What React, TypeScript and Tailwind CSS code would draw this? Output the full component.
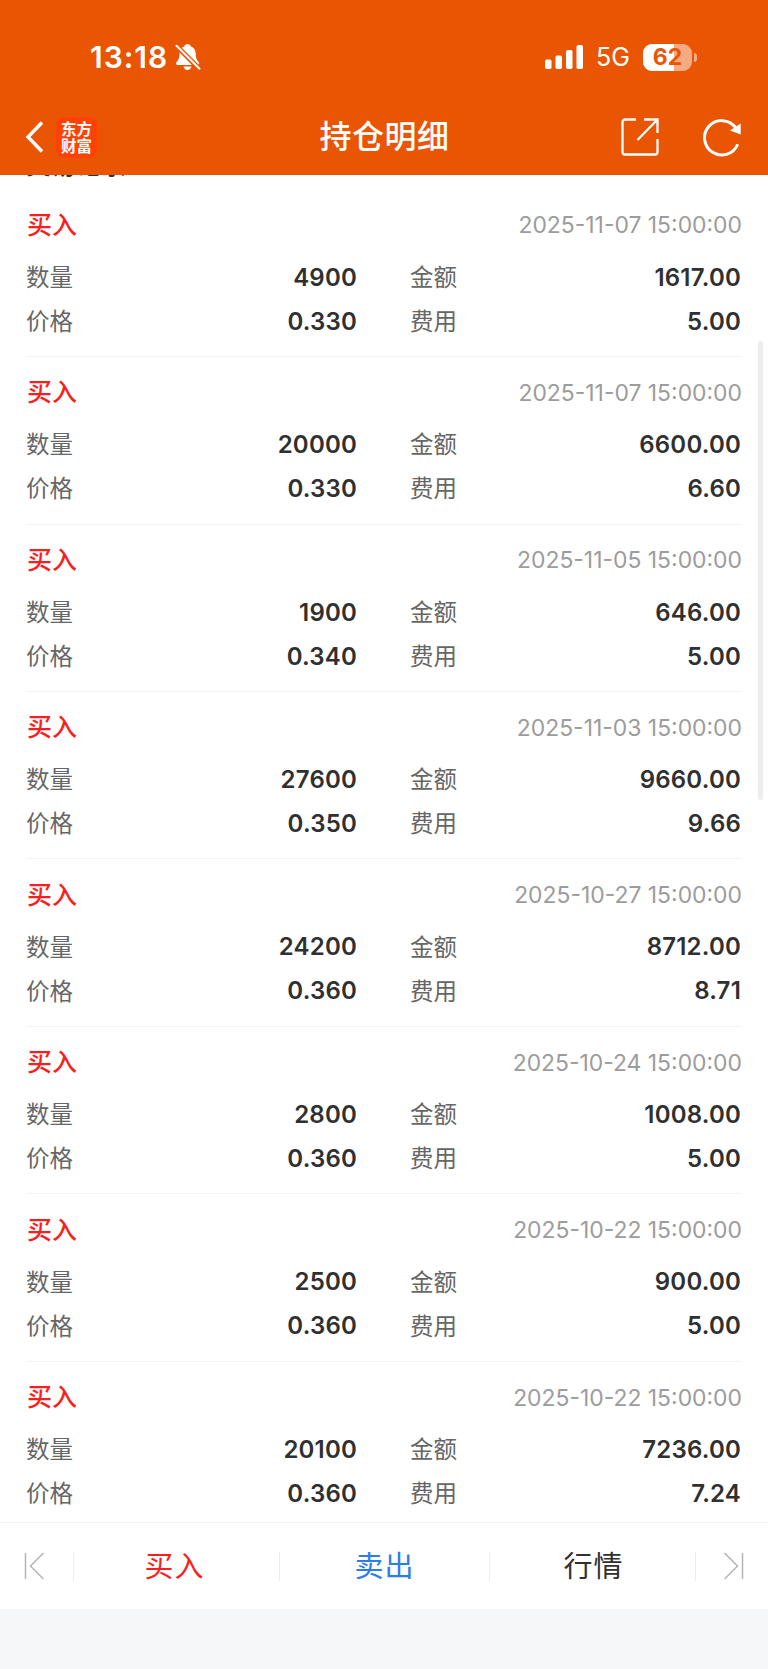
type Trade = {
  time: string;
  count: string;
  price: string;
  amount: string;
  fee: string;
};

const TRADES: Trade[] = [
  { time: '2025-11-07 15:00:00', count: '4900', price: '0.330', amount: '1617.00', fee: '5.00' },
  { time: '2025-11-07 15:00:00', count: '20000', price: '0.330', amount: '6600.00', fee: '6.60' },
  { time: '2025-11-05 15:00:00', count: '1900', price: '0.340', amount: '646.00', fee: '5.00' },
  { time: '2025-11-03 15:00:00', count: '27600', price: '0.350', amount: '9660.00', fee: '9.66' },
  { time: '2025-10-27 15:00:00', count: '24200', price: '0.360', amount: '8712.00', fee: '8.71' },
  { time: '2025-10-24 15:00:00', count: '2800', price: '0.360', amount: '1008.00', fee: '5.00' },
  { time: '2025-10-22 15:00:00', count: '2500', price: '0.360', amount: '900.00', fee: '5.00' },
  { time: '2025-10-22 15:00:00', count: '20100', price: '0.360', amount: '7236.00', fee: '7.24' },
];

function StatusBar() {
  return (
    <div className="flex h-[115px] items-start justify-between pl-[90px] pr-[71px] pt-[39px]">
      <div className="flex h-9 items-center">
        <span className="w-[85px] text-[30px] font-semibold leading-9 tracking-[1px]">13:18</span>
        <svg width="26" height="28" viewBox="0 0 26 28" fill="none">
          <path
            d="M12.500 1c-1.700 0-2.900 1-3.300 2.400C6 4.500 4.600 7 4.500 10.500c-.1 4.500-1 6.300-3 8.700-.9 1.200-.5 2.800 1.200 2.800h20c1.500 0 2-1.600 1-2.800-2-2.400-2.900-4.200-3-8.700-.1-3.500-1.600-6-4.800-7.100C15.500 2 14.200 1 12.500 1Z"
            fill="#fff"
          />
          <path d="M8.500 23.500h8c-.5 2-2 3.500-4 3.500s-3.500-1.500-4-3.500Z" fill="#fff" />
          <path d="M0 1.500 26 27.500" stroke="#ea5504" strokeWidth="5" />
          <path d="m1.500 2.800 23 22.900" stroke="#fff" strokeWidth="2" strokeLinecap="round" />
        </svg>
      </div>
      <div className="flex h-9 items-center">
        <svg width="39" height="26" viewBox="0 0 39 26" fill="#fff">
          <rect x="0" y="15.500" width="6.500" height="9.500" rx="1.700" />
          <rect x="10.500" y="11.500" width="6.500" height="13.500" rx="1.700" />
          <rect x="21" y="6" width="6.500" height="19" rx="1.700" />
          <rect x="31.500" y="1" width="6.500" height="24" rx="1.700" />
        </svg>
        <span className="ml-[12px] w-[47px] text-[25px] leading-9">5G</span>
        <div className="relative flex h-[27px] w-[49px] items-center justify-center overflow-hidden rounded-[9px] bg-[#f5aa82]">
          <div className="absolute inset-y-0 left-0 w-[31px] bg-white" />
          <span className="relative text-[23px] font-bold leading-none text-[#ea5504]">62</span>
        </div>
        <div className="ml-[2px] h-[9px] w-[3px] rounded-r-full bg-[#f5aa82]" />
      </div>
    </div>
  );
}

function Header() {
  return (
    <header className="relative z-10 h-[175px] shrink-0 bg-[#ea5504] text-white">
      <StatusBar />
      <div className="grid h-[44px] grid-cols-3 items-center pl-[25px] pr-[26px]">
        <div className="flex items-center">
          <svg width="20" height="34" viewBox="0 0 20 34" fill="none" stroke="#fff" strokeWidth="3.400">
            <path d="M17 2.500 3 17l14 14.500" />
          </svg>
          <div className="ml-[11px] flex h-[41px] w-[41px] flex-col items-center justify-center rounded-[8px] bg-[#ff4203] font-['Noto_Sans_CJK_SC',sans-serif] text-[15.500px] font-bold leading-[17px]">
            <span>东方</span>
            <span>财富</span>
          </div>
        </div>
        <h1 className="whitespace-nowrap pl-[2px] text-center text-[32px] font-medium leading-[44px] tracking-[0.500px]">持仓明细</h1>
        <div className="flex items-center justify-end">
          <svg width="40" height="40" viewBox="0 0 40 40" fill="none" stroke="#fff" strokeWidth="2.300">
            <path d="M16 2.500H5A2.500 2.500 0 0 0 2.500 5v30A2.500 2.500 0 0 0 5 37.500h30A2.500 2.500 0 0 0 37.500 35V22" />
            <path d="M24 2.500h13.500V16M37 3 17.500 23" />
          </svg>
          <svg className="ml-[42px]" width="40" height="40" viewBox="0 0 40 40" fill="none">
            <path d="M35.700 27.200A17.200 17.200 0 1 1 33.500 10.500" stroke="#fff" strokeWidth="3" />
            <path d="M38.700 6.500v11l-10.700-4Z" fill="#fff" />
          </svg>
        </div>
      </div>
    </header>
  );
}

function Field({ label, value }: { label: string; value: string }) {
  return (
    <div className="flex h-[44px] items-center justify-between">
      <span className="text-[23.500px] text-[#666]">{label}</span>
      <span className="text-[24px] font-semibold tracking-[0.200px] text-[#303030]">{value}</span>
    </div>
  );
}

function TradeItem({ trade }: { trade: Trade }) {
  return (
    <li className="h-[167.460px] border-b border-[#f4f4f4] pt-[18px]">
      <div className="mb-3 flex h-9 items-center justify-between">
        <span className="pl-px text-[25px] font-medium text-[#fa1e1e]">买入</span>
        <span className="text-[22.900px] text-[#9c9c9c]">{trade.time}</span>
      </div>
      <div className="grid grid-cols-[331px_331px] gap-x-[53px]">
        <Field label="数量" value={trade.count} />
        <Field label="金额" value={trade.amount} />
        <Field label="价格" value={trade.price} />
        <Field label="费用" value={trade.fee} />
      </div>
    </li>
  );
}

function BottomBar() {
  return (
    <nav className="flex h-[87px] shrink-0 items-center border-t border-[#f2f2f2] bg-white text-[29px] tracking-[1px]">
      <div className="flex w-[73px] justify-start pl-[24px]">
        <svg width="21" height="28" viewBox="0 0 21 28" fill="none" stroke="#b4b4b4" strokeWidth="1.500">
          <path d="M1.500 1v26M19.500 1 6.500 14l13 13" />
        </svg>
      </div>
      <button className="h-[29px] w-[206px] border-l border-[#ececec] pr-[4px] leading-[29px] text-[#fa1e1e]">买入</button>
      <button className="h-[29px] w-[210px] border-l border-[#ececec] leading-[29px] text-[#2b7de9]">卖出</button>
      <button className="h-[29px] w-[207px] border-x border-[#ececec] pl-[2px] leading-[29px] text-[#303030]">行情</button>
      <div className="flex w-[72px] justify-end pr-[24px]">
        <svg width="21" height="28" viewBox="0 0 21 28" fill="none" stroke="#b4b4b4" strokeWidth="1.500">
          <path d="M19.500 1v26M1.500 1l13 13-13 13" />
        </svg>
      </div>
    </nav>
  );
}

export default function App() {
  return (
    <div className="flex h-[1669px] w-[768px] flex-col overflow-hidden bg-[#f6f7f9] font-['Inter','Noto_Sans_CJK_SC',sans-serif]">
      <Header />
      <main className="relative h-[1347px] shrink-0 overflow-hidden bg-white px-[26px]">
        <h2 className="-mt-[25px] mb-[9.600px] h-[30px] text-[25px] font-medium leading-[30px] text-[#303030]">交易记录</h2>
        <ul>
          {TRADES.map((trade, i) => (
            <TradeItem key={i} trade={trade} />
          ))}
        </ul>
        <div className="absolute right-[5px] top-[166px] h-[459px] w-[5px] rounded-full bg-[#ededed]" />
      </main>
      <BottomBar />
    </div>
  );
}
